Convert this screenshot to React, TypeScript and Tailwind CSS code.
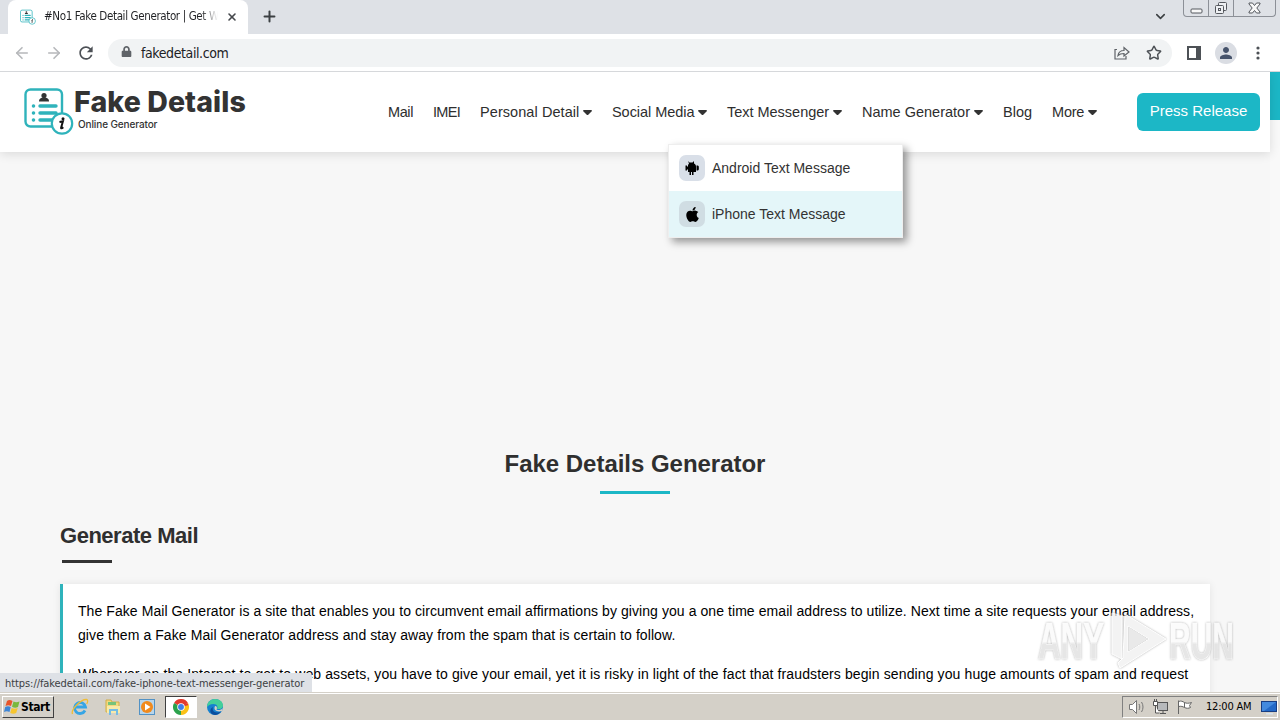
import React from 'react';
import { ArrowLeft, ArrowRight, ChevronDown, Plus, X, Star } from 'lucide-react';
import { FaApple, FaLock } from 'react-icons/fa';
import { MdRefresh, MdPerson } from 'react-icons/md';

const navItems = [
  { label: 'Mail', width: 'w-[25px]', tracking: 'tracking-[-0.4px]', menu: false },
  { label: 'IMEI', width: 'w-[27px]', tracking: 'tracking-[-0.7px]', menu: false },
  { label: 'Personal Detail', width: 'w-[112px]', tracking: 'tracking-[0.07px]', menu: true },
  { label: 'Social Media', width: 'w-[95px]', tracking: 'tracking-[-0.05px]', menu: true },
  { label: 'Text Messenger', width: 'w-[115px]', tracking: 'tracking-[-0.02px]', menu: true },
  { label: 'Name Generator', width: 'w-[121px]', tracking: 'tracking-normal', menu: true },
  { label: 'Blog', width: 'w-[29px]', tracking: 'tracking-normal', menu: false },
  { label: 'More', width: 'w-[45px]', tracking: 'tracking-[-0.2px]', menu: true },
];

const Caret = () => (
  <svg width="9" height="5" viewBox="0 0 9 5" className="mb-[2px] shrink-0">
    <path d="M0.5 0h8L9 1 5 5H4L0 1z" fill="#333" />
  </svg>
);

const LogoMark = ({ size }: { size: number }) => (
  <svg width={size} height={size} viewBox="0 0 50 50" className="shrink-0">
    <rect x="1.5" y="3.5" width="36.500" height="37" rx="5" fill="#fff" stroke="#2fb3bb" strokeWidth="2.4" />
    <circle cx="20" cy="9.5" r="2.6" fill="#333" />
    <path d="M15 15.5c0-3 2-4 5-4s5 1 5 4z" fill="#333" />
    {[20, 27, 34].map(y => (
      <g key={y} stroke="#2fb3bb" strokeWidth="3.4" strokeLinecap="round">
        <path d={`M9.4 ${y}h.2M16 ${y}h16`} />
      </g>
    ))}
    <circle cx="38" cy="37.500" r="10.2" fill="#fff" stroke="#2fb3bb" strokeWidth="2.2" />
    <circle cx="39" cy="32.700" r="1.5" fill="#111" />
    <path d="M35.5 36.1l3.4-.7-1.8 6.3c-.2.9.6.8 2.2-.5" fill="none" stroke="#111" strokeWidth="2" />
  </svg>
);

const TabStrip = () => (
  <div className="flex h-[34px] bg-[#dee1e6] pl-2">
    <div className="flex h-[34px] w-[240px] items-center rounded-t-lg bg-white pl-3">
      <LogoMark size={16} />
      <div className="ml-2 w-[174px] overflow-hidden whitespace-nowrap bg-linear-to-r from-[#202124] from-90% to-transparent bg-clip-text text-[11.500px] tracking-[-0.37px] text-transparent">
        #No1 Fake Detail Generator | Get W
      </div>
      <X size={12} strokeWidth={3.2} className="ml-2 text-[#45484c]" />
    </div>
    <Plus size={17} strokeWidth={2.8} className="ml-[13px] mt-[8px] text-[#3c4043]" />
    <ChevronDown size={15} strokeWidth={2.5} className="ml-auto mt-[9px] text-[#3c4043]" />
    <div className="ml-[15px] mr-1 flex h-[17px] w-[93px] rounded-b-[4px] border border-t-0 border-[#8c9097]">
      <div className="flex w-[25px] items-center justify-center border-r border-[#8c9097]">
        <svg width="13" height="6" className="mt-[5px]"><rect x="1" y="1" width="11" height="4" rx="1" fill="#f8f8f8" stroke="#55585e" /></svg>
      </div>
      <div className="flex w-[25px] items-center justify-center border-r border-[#8c9097]">
        <svg width="14" height="14" fill="#eef0f3" stroke="#55585e">
          <rect x="4.500" y="1.500" width="8" height="8" rx="1" />
          <rect x="1.500" y="4.500" width="8" height="8" rx="1" />
          <rect x="4.500" y="7.500" width="2" height="2" />
        </svg>
      </div>
      <div className="flex flex-1 items-center justify-center">
        <svg width="13" height="12" fill="#f8f8f8" stroke="#55585e">
          <path d="M1 1h3.500l2 2.500L8.500 1H12v1L8.800 6l3.200 4v1H8.500l-2-2.500-2 2.500H1v-1l3.200-4L1 2z" />
        </svg>
      </div>
    </div>
  </div>
);

const Toolbar = () => (
  <div className="flex h-[38px] items-center border-b border-[#d6d8db] bg-white pl-[13px]">
    <ArrowLeft size={18} strokeWidth={2.2} className="text-[#b6b8bb]" />
    <ArrowRight size={18} strokeWidth={2.2} className="ml-[14px] text-[#b6b8bb]" />
    <MdRefresh size={20} className="ml-[13px] text-[#4d5156]" />
    <div className="ml-[12px] flex h-[28px] w-[1064px] items-center rounded-full bg-[#f1f3f4] pl-[13px] pr-[10px]">
      <FaLock size={11} className="mb-[2px] text-[#5f6368]" />
      <span className="ml-[9px] mt-px text-[14px] tracking-[-0.4px] text-[#202124]">fakedetail.com</span>
      <svg width="16" height="14" viewBox="0 0 16 14" className="ml-auto" fill="none" stroke="#5f6368" strokeWidth="1.200">
        <path d="M3 3.500H1V13h11v-3" />
        <path d="M4 9.500c.5-3.500 2.500-5 6-5V1.500L15 6l-5 4V7.500c-2.800 0-4.500.5-6 2z" />
      </svg>
      <Star size={16} strokeWidth={2.200} className="ml-[16px] text-[#4d5156]" />
    </div>
    <svg width="14" height="14" className="ml-[15px]"><rect x="1" y="1" width="12" height="12" fill="none" stroke="#4d5156" strokeWidth="2" /><path d="M9 1h4v12H9z" fill="#4d5156" /></svg>
    <div className="ml-[14px] flex size-[22px] items-center justify-center rounded-full bg-[#dadde3]">
      <MdPerson size={18} className="text-[#46536b]" />
    </div>
    <svg width="4" height="14" className="ml-[19px]" fill="#4d5156">
      <circle cx="2" cy="2" r="1.600" /><circle cx="2" cy="7" r="1.600" /><circle cx="2" cy="12" r="1.600" />
    </svg>
  </div>
);

const SiteHeader = () => (
  <div className="relative flex h-[80px] bg-white pl-6 font-['Liberation_Sans',sans-serif] shadow-[0_2px_10px_rgba(0,0,0,0.12)]">
    <div className="flex w-[364px] pt-[14px]">
      <LogoMark size={50} />
      <div className="whitespace-nowrap text-[#333]">
        <p className="text-[28.500px] font-extrabold leading-[32px] tracking-[0.1px] font-['Inter',sans-serif]">Fake Details</p>
        <p className="ml-[4px] text-[10px] font-medium leading-[12px] tracking-[-0.12px] font-['Inter',sans-serif]">Online Generator</p>
      </div>
    </div>
    <div className="flex h-[80px] items-center gap-5 pt-[2px] text-[14.500px] text-[#2e2e2e]">
      {navItems.map(item => (
        <div key={item.label} className={`flex items-center justify-between whitespace-nowrap ${item.width} ${item.tracking}`}>
          {item.label}
          {item.menu && <Caret />}
        </div>
      ))}
    </div>
    <button className="ml-[40px] mt-[21px] h-[38px] w-[123px] rounded-[6px] bg-[#1cb7c6] pb-[2px] text-[15px] text-white">Press Release</button>

    {/* Text Messenger dropdown */}
    <div className="absolute left-[668px] top-[72px] z-10 w-[235px] border border-[#eee] bg-white text-[14px] text-[#333] shadow-[4px_4px_8px_rgba(0,0,0,0.4)]">
      <div className="flex h-[46px] items-center pl-[10px]">
        <div className="flex size-[26px] items-center justify-center rounded-[7px] bg-[#d9dfe8]">
          <svg width="14" height="16" viewBox="0 0 14 16">
            <path d="M3 1l1.500 1.500h3L9 1v2.500c1.300.6 2 1.500 2 3V12H8.500v3H7v-3H6v3H4.500v-3H3V9.500H2v1H.5v-5H2v1h1V5l1-1.500zM11.500 5.500H13l.8 1v3l-.8 1h-1.500z" fill="#000" />
          </svg>
        </div>
        <span className="ml-[7px]">Android Text Message</span>
      </div>
      <div className="flex h-[46px] items-center bg-[#e4f6f9] pl-[10px]">
        <div className="flex size-[26px] items-center justify-center rounded-[7px] bg-[#d0dde3]">
          <FaApple size={17} className="text-black" />
        </div>
        <span className="ml-[7px]">iPhone Text Message</span>
      </div>
    </div>
  </div>
);

const Watermark = () => (
  <svg width="200" height="62" viewBox="0 0 200 62" className="absolute left-[1036px] top-[609px] opacity-75 drop-shadow-[0_0_1px_#999]">
    <defs>
      <linearGradient id="letters" x1="0" y1="0" x2="0" y2="1">
        <stop offset="0.5" stopColor="#fafafa" />
        <stop offset="0.55" stopColor="#dedede" />
      </linearGradient>
    </defs>
    <g fill="url(#letters)" stroke="#fff" strokeWidth="0.5" fontFamily="Liberation Sans" fontWeight="bold" fontSize="51">
      <text x="2" y="50" textLength="66" lengthAdjust="spacingAndGlyphs">ANY</text>
      <text x="133" y="50" textLength="65" lengthAdjust="spacingAndGlyphs">RUN</text>
    </g>
    <path fillRule="evenodd" d="M76 4l10 3v43l-10-5zM89 5l41 25-46 29-2-5 5-5zM92 17v26l21-13z" fill="#f0f0f0" stroke="#fff" />
    <path d="M93 18v24l19-12z" fill="#e2e2e2" />
  </svg>
);

const Taskbar = () => (
  <div className="flex h-[28px] items-center border-t border-[#d4d0c8] bg-[#d4d0c8] pl-[2px] shadow-[inset_0_1px_0_#fff]">
    <div className="flex h-[22px] w-[52px] items-center border border-b-[#404040] border-l-white border-r-[#404040] border-t-white pl-[1px] text-[12px] font-bold tracking-[-0.4px] text-black">
      <svg width="17" height="16" viewBox="0 0 17 16" className="shrink-0">
        <path d="M3 2c2-1.500 3.500-1 5.500 0L7 7C5 6 3.500 6 1.500 7z" fill="#e8552b" />
        <path d="M9.500 2.500c2 1 3.500 1 6 0L14 8c-2 1-4 .8-6-.2z" fill="#79b83c" />
        <path d="M1.200 8c2-1 3.500-1 5.500 0L5.500 13c-2-1-3.500-1-5.500 0z" fill="#3e86d6" />
        <path d="M7.700 9c2 1 4 1 6 0l-1.500 5c-2 1-4 .8-6 0z" fill="#f6c52e" />
      </svg>
      Start
    </div>
    <svg width="18" height="18" viewBox="0 0 18 18" className="ml-[17px]" fill="none">
      <path d="M14 12.500a5.500 5.500 0 1 1 .5-3.500H5" stroke="#36a5e5" strokeWidth="2.800" />
      <path d="M1.500 16C-.5 12 10 1 15.500 1.500c2 .3 1 3 .2 4.500" stroke="#f0bd35" strokeWidth="1.300" />
    </svg>
    <svg width="18" height="18" viewBox="0 0 18 18" className="ml-[15px]">
      <path d="M2 2h5l1 2h7v10H2z" fill="#f1d97e" stroke="#d3ae48" />
      <path d="M4 4h8v3H4z" fill="#75c37a" />
      <path d="M3 8h13v7H3z" fill="#f8eaa9" />
      <path d="M5 17v-6h9v6h-2v-4H7v4z" fill="#74bce4" />
    </svg>
    <svg width="18" height="18" viewBox="0 0 18 18" className="ml-[16px]">
      <rect x="1.500" y="1.500" width="15" height="15" fill="#b8d5ea" stroke="#5292c5" />
      <circle cx="9" cy="9" r="6" fill="#f18a1c" />
      <path d="M7 5.500l5.500 3.500L7 12.500z" fill="#fff" />
    </svg>
    <div className="ml-[9px] flex h-[22px] w-[32px] items-center justify-center border border-b-white border-l-[#404040] border-r-white border-t-[#404040] bg-white">
      <svg width="16" height="16" viewBox="0 0 18 18">
        <path d="M9 9L1.200 4.500a9 9 0 0 1 15.600 0z" fill="#e33b2e" />
        <path d="M9 9L9 18A9 9 0 0 1 1.200 4.500z" fill="#2ba24c" />
        <path d="M9 9l7.800-4.500A9 9 0 0 1 9 18z" fill="#fbc116" />
        <path d="M9 5h8v2L9 9z" fill="#e33b2e" />
        <circle cx="9" cy="9" r="4.200" fill="#fff" />
        <circle cx="9" cy="9" r="3.300" fill="#3f7fe8" />
      </svg>
    </div>
    <svg width="18" height="18" viewBox="0 0 18 18" className="ml-[9px]">
      <circle cx="9" cy="9" r="8" fill="#1681cf" />
      <path d="M1 9C1 4 5 1 9 1c5 0 8 3 8 6.500 0 3-3 4-6 3.500 1-2 .5-5-3.500-5C4 6 2 7.500 1 9z" fill="#43cf9a" />
      <path d="M7 9c-1.500 4 2 7 8 4.500-2 3-5.500 4-8 3-4-2-3-6 0-7.500z" fill="#0b4d9c" />
      <path d="M9 8c2 0 2.500 2 1.500 3.500 2 1 4.500.8 6.500-1.500l-1 3c-5 1.500-9-1-7-5z" fill="#d4d0c8" />
    </svg>
    <div className="ml-auto mr-[2px] flex h-[22px] w-[156px] items-center border border-b-white border-l-[#808080] border-r-white border-t-[#808080] pl-[5px]">
      <svg width="18" height="16" viewBox="0 0 18 16" fill="#fff" stroke="#777">
        <path d="M1.500 5.500h3l4-4v13l-4-4h-3z" />
        <path d="M11 5c1 1.500 1 4.500 0 6M13.500 3c2 3 2 7 0 10" fill="none" />
      </svg>
      <svg width="17" height="16" viewBox="0 0 17 16" className="ml-[6px]" fill="#fff" stroke="#555">
        <rect x="5.500" y="3.500" width="10" height="8" fill="#b7b9bb" />
        <path d="M1.500 2.500h4v4h-4zM2.500 0v2M4.500 0v2M3.500 7v7h4M8 14.500h6M11 12v2" />
      </svg>
      <svg width="17" height="16" viewBox="0 0 17 16" className="ml-[7px]" fill="#fff" stroke="#666">
        <path d="M2.500 15V1.500M2.500 2.500c3-1 4 0 6 1v5c-2-1-3-1.500-6-1zM8.500 3.500c2 1 4 1 7 0l-2 3 1 2c-2 1-4 1-6 0" />
      </svg>
      <span className="ml-[13px] mt-[2px] whitespace-nowrap text-[11px] tracking-[-0.2px] text-black">12:00 AM</span>
      <svg width="16" height="14" viewBox="0 0 16 14" className="ml-auto mt-[2px] shrink-0">
        <rect x=".5" y=".5" width="15" height="10" fill="#2369c7" stroke="#183e83" />
        <path d="M1 1h14L3 10H1z" fill="#438ade" />
        <path d="M5 12h7v1.500H5z" fill="#d7e3ed" />
      </svg>
    </div>
  </div>
);

export default function App() {
  return (
    <div className="relative flex h-[720px] w-[1280px] flex-col overflow-hidden bg-white font-['DejaVu_Sans_Condensed','DejaVu_Sans',sans-serif]">
      <TabStrip />
      <Toolbar />
      <div className="flex h-[620px] overflow-hidden">
        <div className="w-[1270px] bg-[#f7f7f7] font-['Liberation_Sans',sans-serif]">
          <SiteHeader />
          <div className="px-[60px] pt-[296px]">
            <h1 className="text-center text-[24px] font-bold leading-[32px] tracking-[-0.03px] text-[#2f2f2f]">Fake Details Generator</h1>
            <div className="mx-auto mt-[11px] h-[3px] w-[70px] bg-[#1cb7c6]" />
            <h2 className="mt-[28px] text-[22px] font-bold leading-[28px] tracking-[-0.48px] text-[#2f2f2f]">Generate Mail</h2>
            <div className="ml-[2px] mt-[10px] h-[3px] w-[50px] bg-[#333]" />
            <div className="mt-[21px] h-[160px] whitespace-nowrap border-l-[3px] border-[#2fb3bb] bg-white pl-[15px] pt-[15px] text-[14px] leading-[24px] text-black shadow-[0_0_8px_rgba(0,0,0,0.08)]">
              <p className="tracking-[0.072px]">The Fake Mail Generator is a site that enables you to circumvent email affirmations by giving you a one time email address to utilize. Next time a site requests your email address,</p>
              <p className="tracking-[0.08px]">give them a Fake Mail Generator address and stay away from the spam that is certain to follow.</p>
              <p className="mt-[15px] tracking-[0.112px]">Wherever on the Internet to get to web assets, you have to give your email, yet it is risky in light of the fact that fraudsters begin sending you huge amounts of spam and request</p>
            </div>
          </div>
        </div>
        <div className="w-[10px] bg-[#f9f9f9]">
          <div className="h-[48px] bg-[#1cb7c6]" />
        </div>
      </div>
      <Taskbar />

      {/* Link target bubble */}
      <div className="absolute left-0 top-[673px] h-[19px] w-[312px] overflow-hidden whitespace-nowrap rounded-tr-[3px] bg-[#dee1e6] pl-[5px] text-[11px] leading-[21px] tracking-[-0.07px] text-[#3c4043]">
        https://fakedetail.com/fake-iphone-text-messenger-generator
      </div>
      <Watermark />
    </div>
  );
}
